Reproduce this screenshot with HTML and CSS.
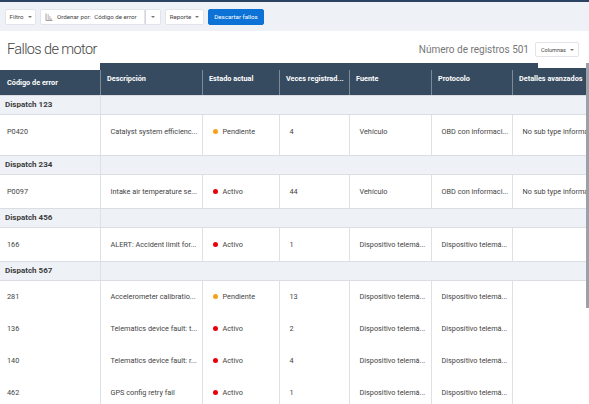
FILE: index.html
```html
<!DOCTYPE html>
<html lang="es">
<head>
    <meta charset="UTF-8">
    <title>Fallos de motor</title>
    <link rel="stylesheet" href="styles.css">
</head>
<body>
    <div class="toolbar">
        <button class="btn btn-filter">Filtro <span class="caret"></span></button>
        <div class="split">
            <button class="btn btn-sort">
                <svg width="8" height="8" viewBox="0 0 8 8" class="sort-icon">
                    <path d="M1 0.5V7.5M1 7.5H7.5M2.5 2H4M2.5 4H5.5M2.5 6H7" stroke="#888" stroke-width="0.8" fill="none"/>
                </svg>
                Ordenar por:&nbsp; Código de error
            </button>
            <button class="btn btn-caret"><span class="caret"></span></button>
        </div>
        <button class="btn btn-report">Reporte <span class="caret"></span></button>
        <button class="btn btn-primary">Descartar fallos</button>
    </div>

    <div class="title-bar">
        <h1>Fallos de motor</h1>
        <div class="records">
            <span>Número de registros 501</span>
            <button class="btn btn-small">Columnas <span class="caret"></span></button>
        </div>
    </div>

    <div class="table-wrap">
        <table class="grid">
            <colgroup>
                <col style="width: 100px">
                <col style="width: 102px">
                <col style="width: 77px">
                <col style="width: 70px">
                <col style="width: 82px">
                <col style="width: 81px">
                <col style="width: 110px">
            </colgroup>
            <thead>
                <tr class="head">
                    <th class="th-first">Código de error</th>
                    <th>Descripción</th>
                    <th>Estado actual</th>
                    <th>Veces registrad...</th>
                    <th>Fuente</th>
                    <th>Protocolo</th>
                    <th class="th-last">Detalles avanzados</th>
                </tr>
            </thead>
            <tbody>
                <tr class="group"><td>Dispatch 123</td><td colspan="6"></td></tr>
                <tr class="row row-tall">
                    <td class="code">P0420</td>
                    <td>Catalyst system efficienc...</td>
                    <td><span class="dot dot-pending"></span>Pendiente</td>
                    <td>4</td>
                    <td>Vehículo</td>
                    <td>OBD con informaci...</td>
                    <td>No sub type information</td>
                </tr>
                <tr class="group"><td>Dispatch 234</td><td colspan="6"></td></tr>
                <tr class="row row-mid">
                    <td class="code">P0097</td>
                    <td>Intake air temperature se...</td>
                    <td><span class="dot dot-active"></span>Activo</td>
                    <td>44</td>
                    <td>Vehículo</td>
                    <td>OBD con informaci...</td>
                    <td>No sub type information</td>
                </tr>
                <tr class="group"><td>Dispatch 456</td><td colspan="6"></td></tr>
                <tr class="row row-mid">
                    <td class="code">166</td>
                    <td>ALERT: Accident limit for...</td>
                    <td><span class="dot dot-active"></span>Activo</td>
                    <td>1</td>
                    <td>Dispositivo telemá...</td>
                    <td>Dispositivo telemá...</td>
                    <td></td>
                </tr>
                <tr class="group"><td>Dispatch 567</td><td colspan="6"></td></tr>
                <tr class="row row-plain">
                    <td class="code">281</td>
                    <td>Accelerometer calibratio...</td>
                    <td><span class="dot dot-pending"></span>Pendiente</td>
                    <td>13</td>
                    <td>Dispositivo telemá...</td>
                    <td>Dispositivo telemá...</td>
                    <td></td>
                </tr>
                <tr class="row row-plain">
                    <td class="code">136</td>
                    <td>Telematics device fault: t...</td>
                    <td><span class="dot dot-active"></span>Activo</td>
                    <td>2</td>
                    <td>Dispositivo telemá...</td>
                    <td>Dispositivo telemá...</td>
                    <td></td>
                </tr>
                <tr class="row row-plain">
                    <td class="code">140</td>
                    <td>Telematics device fault: r...</td>
                    <td><span class="dot dot-active"></span>Activo</td>
                    <td>4</td>
                    <td>Dispositivo telemá...</td>
                    <td>Dispositivo telemá...</td>
                    <td></td>
                </tr>
                <tr class="row row-plain">
                    <td class="code">462</td>
                    <td>GPS config retry fail</td>
                    <td><span class="dot dot-active"></span>Activo</td>
                    <td>1</td>
                    <td>Dispositivo telemá...</td>
                    <td>Dispositivo telemá...</td>
                    <td></td>
                </tr>
            </tbody>
        </table>
        <div class="scroll-thumb"></div>
    </div>
</body>
</html>
```

FILE: styles.css
```css
body {
    margin: 0;
    font-family: Roboto, "Liberation Sans", sans-serif;
    color: #444;
    background: #fff;
    overflow: hidden;
}
.toolbar {
    display: flex;
    align-items: center;
    gap: 4px;
    height: 29px;
    padding: 0 5px;
    background: #eef1f5;
    border-top: 2px solid #2b4262;
}
.btn {
    display: inline-flex;
    align-items: center;
    gap: 4px;
    height: 16px;
    padding: 0 4px;
    background: #fff;
    border: 1px solid #e1e4e8;
    border-radius: 2px;
    font-family: inherit;
    font-size: 6.2px;
    color: #444;
    white-space: nowrap;
    box-sizing: border-box;
}
.caret {
    width: 0;
    height: 0;
    border-left: 2px solid transparent;
    border-right: 2px solid transparent;
    border-top: 2px solid #777;
}
.btn-filter {
    width: 31px;
    justify-content: center;
}
.split {
    display: flex;
}
.btn-sort {
    width: 105px;
    gap: 4px;
    border-radius: 2px 0 0 2px;
}
.btn-caret {
    width: 16px;
    justify-content: center;
    border-left: 1px solid #d3d7dc;
    border-radius: 0 2px 2px 0;
}
.btn-report {
    width: 39px;
    justify-content: center;
}
.btn-primary {
    width: 56px;
    justify-content: center;
    background: #0c72d6;
    border-color: #0c72d6;
    color: #fff;
}
.title-bar {
    display: flex;
    align-items: center;
    justify-content: space-between;
    height: 32px;
    padding: 0 10px 0 7px;
}
h1 {
    margin: 4px 0 0;
    font-size: 14.5px;
    font-weight: 300;
    letter-spacing: -0.6px;
    color: #444;
}
.records {
    display: flex;
    align-items: center;
    gap: 6px;
    margin-top: 5px;
    font-size: 10px;
    color: #777;
}
.btn-small {
    height: 15px;
    width: 44px;
    font-size: 5.5px;
    gap: 4px;
    padding: 0 5px;
}
.table-wrap {
    position: relative;
    overflow: hidden;
}
.grid {
    table-layout: fixed;
    width: 622px;
    border-collapse: collapse;
    font-size: 7.3px;
}
.grid th,
.grid td {
    padding-top: 0;
    padding-bottom: 0;
    white-space: nowrap;
    overflow: hidden;
}
.head {
    height: 32px;
}
.grid th {
    padding-left: 7px;
    text-align: left;
    font-weight: 700;
    color: #fff;
    background: linear-gradient(#7d8b99, #7d8b99) left bottom / 1px 25px no-repeat, #364b5f;
}
.grid th.th-first {
    padding-top: 7px;
    background: linear-gradient(#fff, #fff) left top / 100% 7px no-repeat, #364b5f;
}
.grid th.th-last {
    background: linear-gradient(#fff, #fff) right top / 84px 5px no-repeat, linear-gradient(#7d8b99, #7d8b99) left bottom / 1px 25px no-repeat, #364b5f;
}
.grid td {
    border-left: 1px solid #dde1e6;
}
.grid td:first-child {
    border-left: none;
}
.group {
    height: 19px;
}
.group td {
    background: #eef1f5;
    font-size: 8px;
    font-weight: 700;
    color: #3c3c3c;
    padding-left: 5px;
    border-top: 1px solid #dadee3;
    border-bottom: 1px solid #dadee3;
}
.row td {
    padding-left: 10px;
}
.row td.code {
    padding-left: 7px;
}
.row-tall {
    height: 41px;
}
.row-tall td {
    padding-bottom: 6px;
}
.row-mid {
    height: 34px;
}
.row-plain {
    height: 32px;
}
.dot {
    display: inline-block;
    width: 5px;
    height: 5px;
    border-radius: 50%;
    margin-right: 5px;
    vertical-align: 0;
}
.dot-pending {
    background: #f5a21b;
}
.dot-active {
    background: #e8000b;
}
.scroll-thumb {
    position: absolute;
    top: 0;
    right: 0;
    width: 3px;
    height: 245px;
    background: #9aa1a8;
}
```
